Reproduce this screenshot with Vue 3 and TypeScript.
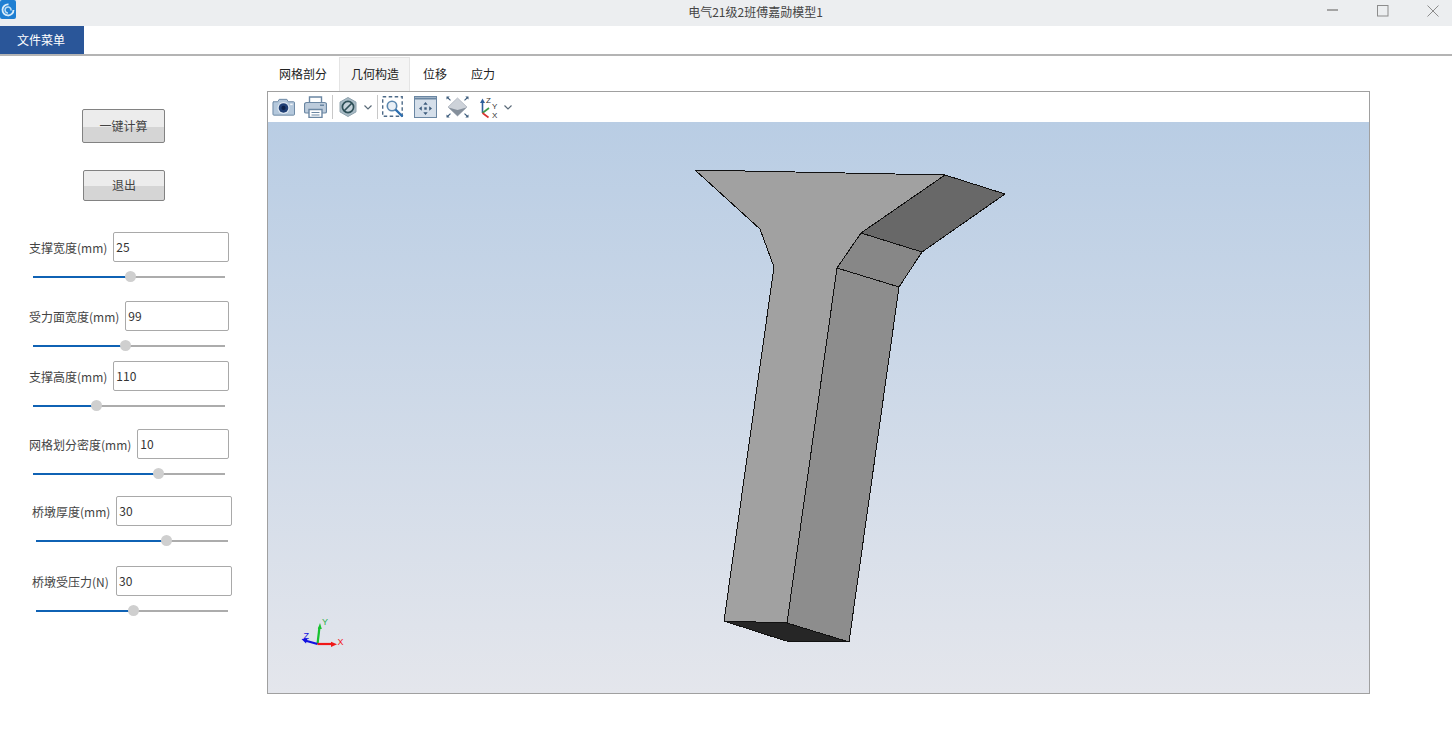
<template>
  <div class="window">
    <!-- 标题栏 -->
    <div class="title-bar">
      <svg class="app-icon" width="16" height="19" viewBox="0 0 16 19">
        <rect x="0" y="0" width="16" height="19" rx="2" fill="#1f7fd2" />
        <path d="M8.500 4.500a5.500 5.500 0 1 0 5 5.500" fill="none" stroke="#d8ecfa" stroke-width="1.8" />
        <path d="M11 10.500a3 3 0 1 0-3 2.500" fill="none" stroke="#bfe0f6" stroke-width="1.5" />
      </svg>
      <div class="title-text">电气21级2班傅嘉勋模型1</div>
      <div class="win-controls">
        <svg width="12" height="12" viewBox="0 0 12 12"><path d="M0 5h11" stroke="#a4a4a4" stroke-width="2" /></svg>
        <svg width="12" height="12" viewBox="0 0 12 12"><rect x="0.500" y="0.500" width="10.500" height="10.500" fill="none" stroke="#8c8c8c" /></svg>
        <svg width="12" height="12" viewBox="0 0 12 12"><path d="M0.500 0.500l11 11M11.500 0.500l-11 11" stroke="#8c8c8c" /></svg>
      </div>
    </div>

    <!-- 菜单 -->
    <div class="menu-bar">
      <button class="file-menu">文件菜单</button>
    </div>

    <div class="main">
      <!-- 左侧参数 -->
      <div class="side">
        <button class="action calc">一键计算</button>
        <button class="action quit">退出</button>
        <div
          v-for="p in params"
          :key="p.label"
          class="param"
          :class="{ shifted: p.shifted }"
          :style="{ marginTop: p.top + 'px' }"
        >
          <div class="param-row">
            <label>{{ p.label }}</label>
            <input type="text" :value="p.value" />
          </div>
          <div class="slider">
            <div class="slider-fill" :style="{ width: p.pos + 'px' }"></div>
            <div class="slider-thumb" :style="{ left: p.pos + 'px' }"></div>
          </div>
        </div>
      </div>

      <!-- 右侧视图 -->
      <div class="content">
        <div class="tabs">
          <div
            v-for="t in tabs"
            :key="t"
            class="tab"
            :class="{ active: t === activeTab }"
            @click="activeTab = t"
          >{{ t }}</div>
        </div>
        <div class="viewer">
          <div class="toolbar">
            <!-- 截图 -->
            <svg class="camera" width="23" height="19" viewBox="0 0 24 19">
              <path d="M1.500 3.500h4.500l1.500-2.500h8l1.500 2.500h5.500a1 1 0 0 1 1 1v12a1 1 0 0 1-1 1h-20.500a1 1 0 0 1-1-1v-12a1 1 0 0 1 1-1z" fill="#b4c8dc" stroke="#6b87a3" />
              <circle cx="12" cy="10" r="6.300" fill="#dfe8f1" />
              <circle cx="12" cy="10" r="5" fill="#1f3f75" />
              <circle cx="12" cy="10" r="2.200" fill="#0c2048" />
              <rect x="19" y="5.500" width="2.500" height="1.500" fill="#f2f6fa" />
            </svg>
            <!-- 打印 -->
            <svg class="print" width="23" height="22" viewBox="0 0 23 22">
              <path d="M5.500 8V1h12v7" fill="#fff" stroke="#6b87a3" stroke-width="1.400" />
              <path d="M2.500 6.500h18a2 2 0 0 1 2 2v7a1.500 1.500 0 0 1-1.500 1.500h-19a1.500 1.500 0 0 1-1.500-1.500v-7a2 2 0 0 1 2-2z" fill="#bccbdb" stroke="#6b87a3" stroke-width="1.200" />
              <path d="M5 13.500h13v8H5z" fill="#fff" stroke="#6b87a3" stroke-width="1.400" />
              <path d="M7.500 16.500h8M7.500 19h8" stroke="#6b87a3" />
              <rect x="16" y="8.500" width="4" height="1.500" fill="#6b87a3" />
            </svg>
            <span class="sep"></span>
            <!-- 剖切 -->
            <svg class="hex" width="18" height="20" viewBox="0 0 18 20">
              <path d="M9 0.500l8 4.600v9.800l-8 4.600-8-4.600v-9.800z" fill="#a7bac4" stroke="#8ea2ad" />
              <circle cx="9" cy="10" r="5.600" fill="#c5d2da" stroke="#2f5058" stroke-width="1.700" />
              <path d="M5 14l8-8" stroke="#2f5058" stroke-width="1.700" />
            </svg>
            <svg class="chev chev1" width="8" height="5" viewBox="0 0 8 5"><path d="M0.500 0.500L4 4l3.500-3.500" fill="none" stroke="#5a6a78" stroke-width="1.200" /></svg>
            <span class="sep sep2"></span>
            <!-- 框选缩放 -->
            <svg class="zoomfit" width="22" height="22" viewBox="0 0 22 22">
              <rect x="0.700" y="0.700" width="19.500" height="19.500" fill="none" stroke="#4d6a88" stroke-width="1.400" stroke-dasharray="3.500 2.500" />
              <circle cx="10" cy="10" r="4.700" fill="#e8eff6" stroke="#5b88b0" stroke-width="1.600" />
              <path d="M13.500 13.500l7 7" stroke="#2e6fb0" stroke-width="2.400" />
            </svg>
            <!-- 适应窗口 -->
            <svg class="fit" width="23" height="22" viewBox="0 0 23 22">
              <rect x="0.500" y="0.500" width="22" height="21" fill="#d5dfea" stroke="#6b87a3" />
              <path d="M0.500 2.500h22" stroke="#6b87a3" stroke-width="2" />
              <path d="M11.500 6l2.200 2.800h-4.400zM11.500 19l2.200-2.800h-4.400zM5 12.500l2.800-2.200v4.400zM18 12.500l-2.800-2.200v4.400z" fill="#3d5c7c" />
              <rect x="10.300" y="11.300" width="2.400" height="2.400" fill="#3d5c7c" />
            </svg>
            <!-- 等轴视图 -->
            <svg class="iso" width="23" height="22" viewBox="0 0 23 22">
              <path d="M11.500 2l9.500 9-9.500 9-9.500-9z" fill="#cdd2d9" stroke="#aeb5bf" stroke-width="0.800" />
              <path d="M2.500 11.500L11.500 20l9-8.500L11.500 14z" fill="#858f9b" />
              <path d="M0.500 0.500h3.200l-3.200 3zM22.500 0.500h-3.200l3.200 3zM0.500 21.500h3.200l-3.200-3zM22.500 21.500h-3.200l3.200-3z" fill="#3d5c7c" />
              <path d="M1.500 1.500l3 2.800M21.500 1.500l-3 2.800M1.500 20.500l3-2.800M21.500 20.500l-3-2.800" stroke="#3d5c7c" stroke-width="1.100" />
            </svg>
            <!-- 坐标轴方向 -->
            <svg class="axes" width="20" height="23" viewBox="0 0 20 23">
              <path d="M3.500 17V5" stroke="#2e5f9c" stroke-width="1.600" />
              <path d="M3.500 2.500L6 7H1z" fill="#2e5f9c" />
              <path d="M3.500 17l6.500-5" stroke="#3d9c4a" stroke-width="1.600" />
              <path d="M3.500 17l6 4.500" stroke="#d8322f" stroke-width="1.600" />
              <text x="7" y="6.500" class="axes-text">Z</text>
              <text x="13" y="13" class="axes-text">Y</text>
              <text x="13" y="22" class="axes-text">X</text>
            </svg>
            <svg class="chev chev2" width="8" height="5" viewBox="0 0 8 5"><path d="M0.500 0.500L4 4l3.500-3.500" fill="none" stroke="#5a6a78" stroke-width="1.200" /></svg>
          </div>
          <div class="canvas">
            <!-- 模型，坐标相对视口 -->
            <svg class="model" width="1100" height="571" viewBox="268 122 1100 571" shape-rendering="crispEdges">
              <g stroke="#111" stroke-width="1" stroke-linejoin="round">
                <path d="M695 170L945 175L861 233L837 268L787 623L724 621L774 267L760 229Z" fill="#a1a1a1" />
                <path d="M945 175L1005 194L922 252L861 233Z" fill="#686868" />
                <path d="M861 233L922 252L899 287L837 268Z" fill="#878787" />
                <path d="M837 268L899 287L849 642L787 623Z" fill="#8d8d8d" />
                <path d="M724 621L787 623L849 642L786 641Z" fill="#262626" />
              </g>
            </svg>
            <svg class="triad" width="50" height="40" viewBox="0 0 50 40">
              <path d="M17.500 29L19.500 12" stroke="#17c22f" stroke-width="2.200" />
              <path d="M20 8l1.800 6h-4z" fill="#17c22f" />
              <path d="M17.500 29L5 25.500" stroke="#1111e0" stroke-width="2.200" />
              <path d="M1.500 24l6-0.500-1.500 5z" fill="#1111e0" />
              <path d="M17.500 29H32" stroke="#f01818" stroke-width="2.200" />
              <path d="M37 29.300l-6-2.600v5.200z" fill="#f01818" />
              <text x="3.500" y="24" class="t-z">Z</text>
              <text x="22" y="10" class="t-y">Y</text>
              <text x="37.500" y="30" class="t-x">X</text>
            </svg>
          </div>
        </div>
      </div>
    </div>
  </div>
</template>

<script setup lang="ts">
import { ref } from 'vue'

interface Param {
  label: string
  value: string
  pos: number
  top: number
  shifted?: boolean
}

// 滑块位置是填充段的像素宽度
const params: Param[] = [
  { label: '支撑宽度(mm)', value: '25', pos: 97, top: 31 },
  { label: '受力面宽度(mm)', value: '99', pos: 92, top: 23 },
  { label: '支撑高度(mm)', value: '110', pos: 63, top: 14 },
  { label: '网格划分密度(mm)', value: '10', pos: 125, top: 22 },
  { label: '桥墩厚度(mm)', value: '30', pos: 130, top: 21, shifted: true },
  { label: '桥墩受压力(N)', value: '30', pos: 97, top: 24, shifted: true }
]

const tabs = ['网格剖分', '几何构造', '位移', '应力']
const activeTab = ref('几何构造')
</script>

<style scoped>
.window {
  width: 1452px;
  height: 737px;
  background: #fff;
  overflow: hidden;
  font-family: "Noto Sans CJK SC", "Open Sans", sans-serif;
  color: #333;
  font-size: 12px;
}

.title-bar {
  position: relative;
  display: flex;
  align-items: flex-start;
  height: 26px;
  background: #eceef0;
}

.title-text {
  position: absolute;
  left: 59px;
  right: 0;
  top: 3px;
  text-align: center;
  font-size: 12px;
  line-height: 17px;
  color: #444;
}

.win-controls {
  margin-left: auto;
  display: flex;
  gap: 38px;
  padding: 5px 13px 0 0;
}

.menu-bar {
  height: 28px;
  border-bottom: 2px solid #b4b4b4;
  box-sizing: content-box;
}

.file-menu {
  display: block;
  width: 84px;
  height: 28px;
  background: #2a5699;
  color: #fff;
  border: none;
  padding: 0 2px 2px 0;
  font: inherit;
  font-size: 12px;
}

.main {
  display: flex;
  height: 681px;
}

.side {
  width: 267px;
  flex: none;
  padding-top: 53px;
  box-sizing: border-box;
}

.action {
  display: block;
  border: 1px solid #828282;
  border-radius: 2px;
  padding: 0 0 2px;
  font: inherit;
  font-size: 12px;
  color: #444;
  background: linear-gradient(#ececec 0, #ececec 52%, #d5d5d5 52%, #d5d5d5 100%);
}

.calc {
  width: 83px;
  height: 34px;
  margin-left: 82px;
}

.quit {
  width: 82px;
  height: 31px;
  margin: 27px 0 0 83px;
}

.param {
  padding-left: 29px;
  width: 200px;
}

.param.shifted {
  padding-left: 32px;
}

.param-row {
  display: flex;
  align-items: center;
  justify-content: space-between;
  width: 200px;
  height: 30px;
}

.param-row label {
  white-space: nowrap;
  color: #444;
  font-size: 12px;
}

.param-row input {
  flex: 1;
  min-width: 0;
  height: 30px;
  box-sizing: border-box;
  margin-left: 6px;
  border: 1px solid #a9a9a9;
  border-radius: 2px;
  padding: 0 2px 2px;
  font: inherit;
  font-size: 12px;
  color: #333;
  outline: none;
}

.param.shifted input {
  flex: none;
  width: 116px;
}

.slider {
  position: relative;
  width: 192px;
  height: 2px;
  margin: 14px 0 0 4px;
  background: #acacac;
}

.slider-fill {
  height: 100%;
  background: #0f62b4;
}

.slider-thumb {
  position: absolute;
  top: -5px;
  width: 11px;
  height: 11px;
  margin-left: -5px;
  border-radius: 50%;
  background: #cfcfcf;
}

.content {
  flex: none;
  width: 1103px;
  padding-top: 1px;
}

.tabs {
  display: flex;
  height: 34px;
}

.tab {
  padding: 0 12px;
  line-height: 34px;
  font-size: 12px;
  color: #222;
  box-sizing: border-box;
}

.tab.active {
  background: #f4f4f4;
  border: 1px solid #e4e4e4;
  border-bottom: none;
  padding: 0 10px 0 11px;
  line-height: 32px;
}

.tab.active + .tab {
  padding-left: 13px;
}

.viewer {
  width: 1103px;
  height: 603px;
  box-sizing: border-box;
  border: 1px solid #a0a0a0;
}

.toolbar {
  display: flex;
  align-items: center;
  height: 30px;
  padding-left: 4px;
  background: #fff;
}

.print {
  margin-left: 9px;
}

.sep {
  width: 1px;
  height: 24px;
  background: #c8c8c8;
  margin: 0 6px 0 5px;
}

.sep2 {
  margin-right: 4px;
}

.chev1 {
  margin-left: 7px;
}

.chev2 {
  margin-left: 5px;
}

.fit {
  margin-left: 10px;
}

.iso {
  margin-left: 9px;
}

.axes {
  margin-left: 10px;
}

.axes-text {
  font-size: 8px;
  fill: #333;
  font-family: "Liberation Sans", sans-serif;
}

.canvas {
  position: relative;
  height: 571px;
  background: linear-gradient(#b9cde4, #e4e6ec);
  overflow: hidden;
}

.model {
  position: absolute;
  left: 0;
  top: 0;
}

.triad {
  position: absolute;
  left: 32px;
  top: 493px;
}

.t-z,
.t-y,
.t-x {
  font-size: 9px;
  font-family: "Liberation Sans", sans-serif;
}

.t-z {
  fill: #1111e0;
}

.t-y {
  fill: #30b050;
}

.t-x {
  fill: #f01818;
}
</style>
